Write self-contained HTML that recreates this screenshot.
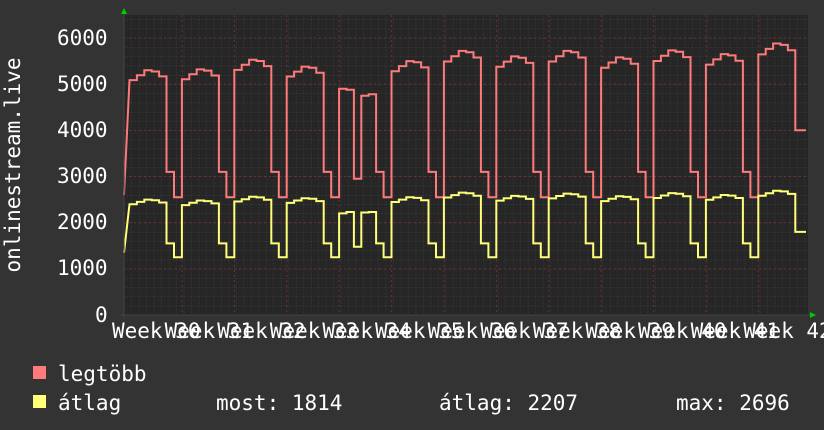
<!DOCTYPE html>
<html><head><meta charset="utf-8"><style>
html,body{margin:0;padding:0;background:#333;}
body{width:824px;height:430px;overflow:hidden;position:relative;font-family:"DejaVu Sans Mono","Liberation Mono",monospace;color:#fff;}
.t{position:absolute;font-size:21px;line-height:1;white-space:pre;}
</style></head><body>
<svg id="g" width="824" height="430" style="position:absolute;left:0;top:0">
<defs>
<pattern id="minor" x="124" y="315" width="7.48" height="9.234" patternUnits="userSpaceOnUse">
<line x1="0" y1="0" x2="0" y2="9.234" stroke="#4a4a4a" stroke-width="1" stroke-dasharray="1,2"/>
<line x1="0" y1="0" x2="7.48" y2="0" stroke="#4a4a4a" stroke-width="1" stroke-dasharray="1,2"/>
</pattern>
</defs>
<rect x="124" y="15" width="684" height="300" fill="#262626"/>
<rect x="124" y="15" width="684" height="300" fill="url(#minor)"/>
<g id="major" stroke="#6e3030" stroke-width="1" stroke-dasharray="2,3"></g>
<g id="data" fill="none" stroke-width="2"></g>
<line x1="124" y1="12" x2="124" y2="318" stroke="#444"/>
<line x1="121" y1="315" x2="810" y2="315" stroke="#444"/>
<polygon points="121,14 127,14 124,8" fill="#0c0"/>
<polygon points="810,312 810,318 816,315" fill="#0c0"/>
<rect x="33" y="366" width="13" height="13" fill="#ff7a7a"/>
<rect x="33" y="395" width="13" height="13" fill="#ffff7a"/>
<text x="20" y="165" transform="rotate(-90 20 165)" text-anchor="middle" font-size="21" fill="#fff" font-family="DejaVu Sans Mono,monospace">onlinestream.live</text>
</svg>
<div class="t" style="left:57px;top:28px">6000</div>
<div class="t" style="left:57px;top:74px">5000</div>
<div class="t" style="left:57px;top:120px">4000</div>
<div class="t" style="left:57px;top:166px">3000</div>
<div class="t" style="left:57px;top:212px">2000</div>
<div class="t" style="left:57px;top:258px">1000</div>
<div class="t" style="left:95px;top:305px">0</div>
<div id="xl"></div>
<div class="t" style="left:58px;top:364px">legtöbb</div>
<div class="t" style="left:58px;top:393px">átlag</div>
<div class="t" style="left:216px;top:393px">most: 1814</div>
<div class="t" style="left:439px;top:393px">átlag: 2207</div>
<div class="t" style="left:676px;top:393px">max: 2696</div>
<script>
var ns="http://www.w3.org/2000/svg";
function y(v){return 315-v*0.04617;}
var maj=document.getElementById('major');
for(var v=1000;v<=6000;v+=1000){var l=document.createElementNS(ns,'line');l.setAttribute('x1',124);l.setAttribute('x2',808);l.setAttribute('y1',y(v));l.setAttribute('y2',y(v));maj.appendChild(l);}
for(var k=0;k<13;k++){var x=182+52.4*k;if(x>808)break;var l=document.createElementNS(ns,'line');l.setAttribute('x1',x);l.setAttribute('x2',x);l.setAttribute('y1',15);l.setAttribute('y2',315);maj.appendChild(l);}
var xl=document.getElementById('xl'),h='';
for(var k=0;k<13;k++){h+='<div class="t" style="left:'+(112+52.6*k)+'px;top:321px">Week '+(30+k)+'</div>';}
xl.innerHTML=h;
var RM=[5300,5320,5530,5380,4900,5500,5720,5600,5720,5580,5730,5650,5880,5830];
var YM=[2500,2480,2560,2530,2250,2550,2650,2580,2630,2570,2640,2600,2690,2680];
function build(M,hiF,we1,we2,start,isR){
 var p=[[124,start]];var x0=129.5;
 for(var w=0;w<13;w++){
  var b=x0+52.4*w;var m=M[w];
  var d=[0.96,0.98,1,0.995,0.975];
  if(w==4&&isR){var dv=[4900,4880,2950,4750,4780];for(var i=0;i<5;i++){p.push([b+7.4*i,y(dv[i])]);p.push([b+7.4*(i+1),y(dv[i])]);}}
  else if(w==4){var dv=[2200,2230,1480,2220,2230];for(var i=0;i<5;i++){p.push([b+7.4*i,y(dv[i])]);p.push([b+7.4*(i+1),y(dv[i])]);}}
  else for(var i=0;i<5;i++){p.push([b+7.4*i,y(m*d[i])]);p.push([b+7.4*(i+1),y(m*d[i])]);}
  if(w==12){p.push([b+37,y(isR?4000:1800)]);p.push([806,y(isR?4000:1800)]);break;}
  p.push([b+37,y(we1)]);p.push([b+44.5,y(we1)]);p.push([b+44.5,y(we2)]);p.push([b+52.4,y(we2)]);
 }
 return 'M'+p.map(function(q){return q[0].toFixed(1)+','+q[1].toFixed(1)}).join('L');
}
var g=document.getElementById('data');
var a=document.createElementNS(ns,'path');a.setAttribute('d',build(RM,1,3100,2550,y(2600),true));a.setAttribute('stroke','#ff7a7a');g.appendChild(a);
var b=document.createElementNS(ns,'path');b.setAttribute('d',build(YM,1,1550,1250,y(1350),false));b.setAttribute('stroke','#ffff7a');g.appendChild(b);
</script>
</body></html>
